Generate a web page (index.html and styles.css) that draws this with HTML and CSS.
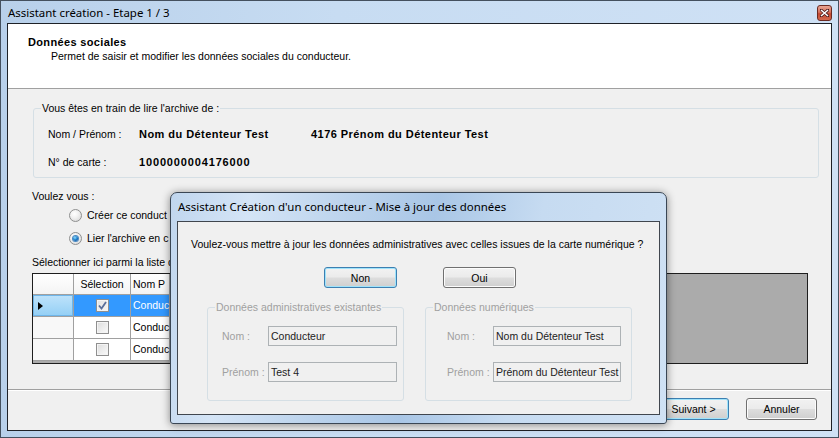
FILE: index.html
```html
<!DOCTYPE html>
<html lang="fr">
<head>
<meta charset="utf-8">
<title>Assistant création - Etape 1 / 3</title>
<link rel="stylesheet" href="styles.css">
</head>
<body>
<div class="window">
  <div class="titlebar">
    <span class="title">Assistant création - Etape 1 / 3</span>
    <span class="close"><svg width="9" height="8" viewBox="0 0 9 8"><path d="M1 1 L8 7 M8 1 L1 7" stroke="#4a1a1a" stroke-width="3" stroke-linecap="square"/><path d="M1 1 L8 7 M8 1 L1 7" stroke="#ffffff" stroke-width="1.6"/></svg></span>
  </div>
  <div class="client">
    <div class="header">
      <div class="h-title">Données sociales</div>
      <div class="h-sub">Permet de saisir et modifier les données sociales du conducteur.</div>
    </div>
    <div class="body">
      <div class="group archive">
        <span class="group-title">Vous êtes en train de lire l'archive de :</span>
        <div class="arow first"><span class="alabel">Nom / Prénom :</span><span class="aval">Nom du Détenteur Test</span><span class="aval">4176 Prénom du Détenteur Test</span></div>
        <div class="arow"><span class="alabel">N° de carte :</span><span class="aval num">1000000004176000</span></div>
      </div>
      <div class="question">Voulez vous :</div>
      <div class="radio"><span class="rb"></span><span class="rtext">Créer ce conduct</span></div>
      <div class="radio"><span class="rb on"></span><span class="rtext">Lier l'archive en c</span></div>
      <div class="select-label">Sélectionner ici parmi la liste d</div>
      <div class="grid">
        <div class="grow ghead">
          <div class="cell rh"></div>
          <div class="cell csel center">Sélection</div>
          <div class="cell cnom">Nom P</div>
        </div>
        <div class="grow selected">
          <div class="cell rh"><span class="arrow"></span></div>
          <div class="cell csel center"><span class="cb checked"><svg width="9" height="9" viewBox="0 0 9 9"><path d="M1 4.5 L3.5 7.5 L8 1" fill="none" stroke="#5b6f9a" stroke-width="1.8"/></svg></span></div>
          <div class="cell cnom">Conduc</div>
        </div>
        <div class="grow">
          <div class="cell rh"></div>
          <div class="cell csel center"><span class="cb"></span></div>
          <div class="cell cnom">Conduc</div>
        </div>
        <div class="grow">
          <div class="cell rh"></div>
          <div class="cell csel center"><span class="cb"></span></div>
          <div class="cell cnom">Conduc</div>
        </div>
      </div>
    </div>
    <div class="footer">
      <button class="btn focus">Suivant &gt;</button>
      <button class="btn">Annuler</button>
    </div>
  </div>

  <div class="dialog">
    <div class="dlg-title">Assistant Création d'un conducteur - Mise à jour des données</div>
    <div class="dlg-client">
      <div class="dlg-question">Voulez-vous mettre à jour les données administratives avec celles issues de la carte numérique ?</div>
      <div class="dlg-buttons">
        <button class="btn small focus">Non</button>
        <button class="btn small">Oui</button>
      </div>
      <div class="dlg-groups">
        <div class="group dgroup left">
          <span class="group-title dis">Données administratives existantes</span>
          <div class="frow first"><span class="flabel">Nom :</span><span class="tbox">Conducteur</span></div>
          <div class="frow"><span class="flabel">Prénom :</span><span class="tbox">Test 4</span></div>
        </div>
        <div class="group dgroup right">
          <span class="group-title dis">Données numériques</span>
          <div class="frow first"><span class="flabel">Nom :</span><span class="tbox">Nom du Détenteur Test</span></div>
          <div class="frow"><span class="flabel">Prénom :</span><span class="tbox">Prénom du Détenteur Test</span></div>
        </div>
      </div>
    </div>
  </div>
</div>
</body>
</html>
```
FILE: styles.css
```css
* { box-sizing: border-box; }
html, body { margin: 0; padding: 0; }
body {
  width: 839px; height: 438px; overflow: hidden;
  font-family: "Liberation Sans", Arial, sans-serif;
  font-size: 10.5px; color: #000; background: #fff;
}
.window {
  position: relative;
  width: 839px; height: 438px;
  border: 1px solid #44505e;
  background: linear-gradient(to right, #b8d0ea 0%, #c7dcf2 40%, #cfe1f5 100%);
  padding: 0 6px 6px 6px;
  display: flex; flex-direction: column;
}
.titlebar {
  height: 22px;
  display: flex; justify-content: space-between; align-items: flex-start;
  padding: 2px 0 0 1px;
}
.title {
  font-family: "Noto Sans", "Open Sans", sans-serif;
  font-size: 11.45px; line-height: 20px; color: #000;
}
.close {
  width: 15px; height: 16px; margin-top: 2px;
  border: 1px solid #6b2a22; border-radius: 3px;
  background: linear-gradient(#e8a493 0%, #d4705c 45%, #c4472f 55%, #d26a4f 100%);
  display: flex; align-items: center; justify-content: center;
}
.client {
  flex: 1;
  border: 1px solid #1e2127;
  background: #f0f0f0;
  display: flex; flex-direction: column;
}
.header {
  height: 65px;
  background: #fff;
  border-bottom: 1px solid #a0a0a0;
  padding: 12px 0 0 20px;
  line-height: 13px;
}
.h-title { font-weight: bold; font-size: 11px; letter-spacing: 0.35px; }
.h-sub { padding-left: 23px; margin-top: 1px; }

.body { flex: 1; line-height: 13px; }
.group {
  border: 1px solid #d5dfe5;
  border-radius: 3px;
  line-height: 13px;
}
.group-title {
  display: block; width: max-content;
  margin: -7px 0 0 7px; padding: 0 1px;
  background: #f0f0f0;
}
.group-title.dis { color: #a0a0a0; }
.archive {
  margin: 19px 12px 0 25px;
  height: 70px;
  padding-left: 14px;
}
.archive .group-title { margin-left: -7px; }
.arow { display: flex; margin-top: 15px; }
.arow.first { margin-top: 13px; }
.alabel { width: 91px; }
.aval { font-weight: bold; font-size: 11px; width: 172px; letter-spacing: 0.45px; white-space: nowrap; }
.aval.num { letter-spacing: 0.85px; }

.question { margin: 12px 0 0 24px; }
.radio { height: 23px; display: flex; align-items: center; padding-left: 61px; margin-top: 1px; white-space: nowrap; }
.radio + .radio { margin-top: 0; }
.rb {
  width: 13px; height: 13px; border-radius: 50%;
  border: 1px solid #8e8f8f;
  background: radial-gradient(circle at 40% 35%, #ffffff 0%, #f1f1f1 40%, #d2d2d2 100%);
  margin-right: 5px; flex: none;
  display: flex; align-items: center; justify-content: center;
}
.rb.on::after {
  content: ""; width: 5px; height: 5px; border-radius: 50%;
  background: radial-gradient(circle at 40% 35%, #8ee0ff 0%, #1a7bc9 50%, #0b3f86 100%);
  box-shadow: 0 0 0 1px #4b8ac2;
}
.select-label { margin: 6px 0 0 24px; white-space: nowrap; }

.grid {
  margin: 4px 0 0 24px;
  width: 776px; height: 91px;
  border: 1px solid #1e1e1e;
  background: #ababab;
  overflow: hidden;
}
.grow { display: flex; height: 22px; }
.grow.ghead { height: 21px; }
.cell {
  border-right: 1px solid #a0a0a0;
  border-bottom: 1px solid #a0a0a0;
  background: #fff;
  display: flex; align-items: center;
  padding-left: 2px; white-space: nowrap;
}
.center { justify-content: center; padding-left: 0; }
.ghead .cell { background: linear-gradient(#ffffff, #f4f4f4); }
.rh { width: 41px; background: #f8f8f8; }
.csel { width: 57px; }
.cnom { width: 39px; }
.selected .cell { background: #3399ff; color: #fff; }
.selected .rh {
  background: linear-gradient(#bfe3fb, #93cff5);
  box-shadow: inset 0 0 0 1px #6fb6ea;
  padding-left: 5px;
}
.arrow {
  width: 0; height: 0;
  border-top: 4px solid transparent; border-bottom: 4px solid transparent;
  border-left: 5px solid #000;
}
.cb {
  width: 13px; height: 13px;
  border: 1px solid #8f8f8f;
  background: linear-gradient(135deg, #dcdcdc, #fbfbfb);
  box-shadow: inset 0 0 0 1px #f4f4f4;
  display: flex; align-items: center; justify-content: center;
}
.selected .cb { background: linear-gradient(135deg, #e2e2e2, #f6f6f6); }

.footer {
  height: 41px;
  border-top: 1px solid #a0a0a0;
  box-shadow: inset 0 1px 0 #ffffff;
  display: flex; justify-content: flex-end; align-items: flex-start;
  padding: 8px 14px 0 0;
  gap: 17px;
}
.btn {
  width: 71px; height: 22px;
  font-family: "Liberation Sans", Arial, sans-serif; font-size: 10.5px; color: #000;
  border: 1px solid #707070; border-radius: 3px;
  background: linear-gradient(#f2f2f2 0%, #ebebeb 48%, #dddddd 52%, #cfcfcf 100%);
  box-shadow: inset 0 0 0 1px #fcfcfc;
  padding: 0;
}
.btn.focus {
  border-color: #3c7fb1;
  box-shadow: inset 0 0 0 1px #9fe3fb;
}

.dialog {
  position: absolute; left: 169px; top: 191px;
  width: 497px; height: 232px;
  border: 1px solid #3a4654;
  border-radius: 7px 7px 3px 3px;
  background: linear-gradient(100deg, #c0d6ee 0%, #d4e4f6 15%, #bad2ec 35%, #a9c6e6 50%, #c6dbf1 70%, #cfe1f4 100%);
  box-shadow: 0 1px 8px rgba(0,0,0,0.45);
  padding: 0 6px 8px 6px;
  display: flex; flex-direction: column;
}
.dlg-title {
  height: 28px;
  padding: 4px 0 0 1px;
  font-family: "Noto Sans", "Open Sans", sans-serif;
  font-size: 11.45px; line-height: 20px;
}
.dlg-client {
  flex: 1;
  border: 1px solid #40464e;
  background: #f0f0f0;
  line-height: 13px;
}
.dlg-question { margin: 16px 0 0 13px; white-space: nowrap; }
.dlg-buttons { display: flex; margin: 16px 0 0 146px; gap: 46px; }
.btn.small { width: 73px; height: 21px; }
.dlg-groups { display: flex; margin: 19px 0 0 29px; gap: 21px; }
.dgroup { height: 94px; }
.dgroup.left { width: 197px; }
.dgroup.right { width: 207px; }
.frow { display: flex; align-items: center; height: 20px; margin-top: 16px; }
.frow.first { margin-top: 12px; }
.flabel { color: #a0a0a0; flex: none; }
.left .flabel { width: 46px; margin-left: 14px; }
.right .flabel { width: 46px; margin-left: 21px; }
.tbox {
  height: 20px; line-height: 18px;
  border: 1px solid #adb2b5;
  background: #f0f0f0;
  padding-left: 2px;
  white-space: nowrap; overflow: hidden;
  color: #222;
}
.left .tbox { width: 129px; }
.right .tbox { width: 128px; }
```
